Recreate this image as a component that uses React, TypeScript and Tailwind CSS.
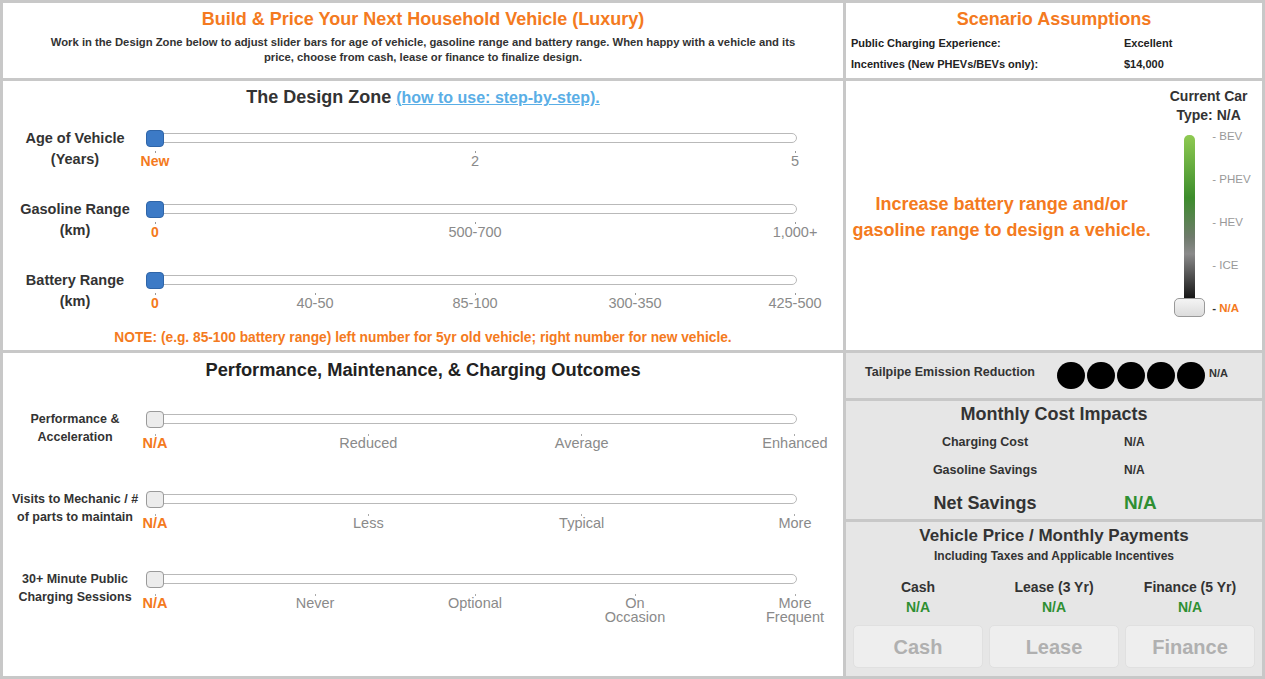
const font = "font-['Liberation_Sans',Arial,sans-serif]";

type SliderRow = { label: string[]; ticks: string[][] };

const designRows: SliderRow[] = [
  { label: ["Age of Vehicle", "(Years)"], ticks: [["New"], ["2"], ["5"]] },
  { label: ["Gasoline Range", "(km)"], ticks: [["0"], ["500-700"], ["1,000+"]] },
  {
    label: ["Battery Range", "(km)"],
    ticks: [["0"], ["40-50"], ["85-100"], ["300-350"], ["425-500"]],
  },
];

const outcomeRows: SliderRow[] = [
  { label: ["Performance &", "Acceleration"], ticks: [["N/A"], ["Reduced"], ["Average"], ["Enhanced"]] },
  { label: ["Visits to Mechanic / #", "of parts to maintain"], ticks: [["N/A"], ["Less"], ["Typical"], ["More"]] },
  {
    label: ["30+ Minute Public", "Charging Sessions"],
    ticks: [["N/A"], ["Never"], ["Optional"], ["On", "Occasion"], ["More", "Frequent"]],
  },
];

function Track({ blue }: { blue: boolean }) {
  return (
    <div className="relative flex h-[17px] items-center">
      <div className="h-[10px] w-full rounded-full border border-[#b9b9b9] bg-white" />
      {blue ? (
        <div className="absolute left-[-1px] top-0 h-[17px] w-[18px] rounded-[4px] border border-[#2f65a8] bg-[#3c7ac6]" />
      ) : (
        <div className="absolute left-[-1px] top-0 h-[17px] w-[18px] rounded-[4px] border border-[#9a9a9a] bg-[#ececec]" />
      )}
    </div>
  );
}

function DesignRow({ row }: { row: SliderRow }) {
  return (
    <div className="flex h-[71px]">
      <div className="-mt-[2px] w-[144px] text-center text-[14.5px] font-bold leading-[21px] text-[#333]">
        {row.label.map((l) => (
          <div key={l}>{l}</div>
        ))}
      </div>
      <div className="w-[650px]">
        <Track blue />
        <div className="ml-[8px] mt-[4px] flex w-[640px] justify-between">
          {row.ticks.map((t, i) => (
            <div key={i} className="flex w-0 flex-col items-center">
              <div className="h-[2px] w-px bg-[#999]" />
              <div
                className={
                  i === 0
                    ? "whitespace-nowrap text-[14px] font-bold leading-[16px] text-[#f47a20]"
                    : "whitespace-nowrap text-[14.5px] leading-[16px] text-[#8a8a8a]"
                }
              >
                {t[0]}
              </div>
            </div>
          ))}
        </div>
      </div>
    </div>
  );
}

function OutcomeRow({ row }: { row: SliderRow }) {
  return (
    <div className="flex h-[80px]">
      <div className="-mt-[0.5px] w-[144px] text-center text-[12.5px] font-bold leading-[18px] text-[#333]">
        {row.label.map((l) => (
          <div key={l} className="whitespace-nowrap">
            {l}
          </div>
        ))}
      </div>
      <div className="w-[650px]">
        <Track blue={false} />
        <div className="ml-[8px] mt-[6px] flex w-[640px] justify-between">
          {row.ticks.map((t, i) => (
            <div key={i} className="flex w-0 flex-col items-center">
              <div className="h-[2px] w-px bg-[#aaa]" />
              <div
                className={
                  i === 0
                    ? "whitespace-nowrap text-[14.5px] font-bold leading-[14px] text-[#f47a20]"
                    : "whitespace-nowrap text-center text-[14.5px] leading-[14px] text-[#8a8a8a]"
                }
              >
                {t.map((line) => (
                  <div key={line}>{line}</div>
                ))}
              </div>
            </div>
          ))}
        </div>
      </div>
    </div>
  );
}

function CarType() {
  const types = ["BEV", "PHEV", "HEV", "ICE"];
  return (
    <div className="w-[105px] pt-[5.5px]">
      <div className="pr-[2px] text-center text-[14px] font-bold leading-[19px] text-[#333]">
        <div>Current Car</div>
        <div>Type: N/A</div>
      </div>
      <div className="ml-[17px] mt-[4.5px] flex">
        <div className="flex w-[31px] flex-col items-center pt-[6px]">
          <div className="h-[165px] w-[11px] rounded-t-[5px] bg-[linear-gradient(to_bottom,#8fca52_0%,#3d8d2c_38%,#6f7a6c_62%,#8a8a8a_72%,#111_100%)]" />
          <div className="-mt-[2px] h-[19px] w-[31px] rounded-[5px] border border-[#999] bg-[linear-gradient(to_bottom,#f4f4f4,#dcdcdc)]" />
        </div>
        <div className="ml-[7px] flex flex-col gap-[29px] text-[11.5px] leading-[14px]">
          {types.map((t) => (
            <div key={t} className="text-[#999]">
              - {t}
            </div>
          ))}
          <div className="font-bold text-[#f47a20]">
            <span className="text-[#333]">-</span> N/A
          </div>
        </div>
      </div>
    </div>
  );
}

export default function App() {
  return (
    <div
      className={`${font} grid h-[679px] w-[1265px] grid-cols-[840px_416px] grid-rows-[75px_269px_323px] gap-[3px] bg-[#c8c8c8] p-[3px]`}
    >
      {/* header */}
      <div className="bg-white pt-[5px] text-center">
        <div className="text-[18px] font-bold leading-[22px] text-[#f47a20]">
          Build &amp; Price Your Next Household Vehicle (Luxury)
        </div>
        <div className="mt-[4.5px] text-[11.25px] font-bold leading-[15px] text-[#333]">
          Work in the Design Zone below to adjust slider bars for age of vehicle, gasoline range and battery range. When
          happy with a vehicle and its
          <br />
          price, choose from cash, lease or finance to finalize design.
        </div>
      </div>

      <div className="bg-white pt-[5px]">
        <div className="text-center text-[18px] font-bold leading-[22px] text-[#f47a20]">Scenario Assumptions</div>
        <div className="mt-[2.5px] grid grid-cols-[273px_1fr] pl-[5px] text-[11px] font-bold leading-[21px] text-[#222]">
          <div>Public Charging Experience:</div>
          <div>Excellent</div>
          <div>Incentives (New PHEVs/BEVs only):</div>
          <div>$14,000</div>
        </div>
      </div>

      {/* design zone */}
      <div className="bg-white pt-[4px]">
        <div className="text-center leading-[24px]">
          <span className="text-[18px] font-bold text-[#333]">The Design Zone </span>
          <span className="text-[16px] font-bold text-[#5aaee6] underline">(how to use: step-by-step).</span>
        </div>
        <div className="mt-[19.5px] flex flex-col">
          {designRows.map((r) => (
            <DesignRow key={r.label[0]} row={r} />
          ))}
        </div>
        <div className="-mt-[13px] text-center text-[13.75px] font-bold leading-[16px] text-[#f47a20]">
          NOTE: (e.g. 85-100 battery range) left number for 5yr old vehicle; right number for new vehicle.
        </div>
      </div>

      <div className="flex bg-white">
        <div className="flex w-[312px] items-center justify-center text-center text-[18px] font-bold leading-[26px] text-[#f47a20]">
          <div className="mt-[2px]">
            Increase battery range and/or
            <br />
            gasoline range to design a vehicle.
          </div>
        </div>
        <CarType />
      </div>

      {/* outcomes */}
      <div className="bg-white pt-[5px]">
        <div className="text-center text-[18.25px] font-bold leading-[24px] text-[#222]">
          Performance, Maintenance, &amp; Charging Outcomes
        </div>
        <div className="mt-[28.5px] flex flex-col">
          {outcomeRows.map((r) => (
            <OutcomeRow key={r.label[0]} row={r} />
          ))}
        </div>
      </div>

      <div className="flex flex-col gap-[3px]">
        <div className="flex h-[45px] items-center bg-[#e6e6e6]">
          <div className="mb-[7px] w-[211px] pl-[19px] text-[12.5px] font-bold text-[#333]">
            Tailpipe Emission Reduction
          </div>
          <div className="flex gap-[2px]">
            {[0, 1, 2, 3, 4].map((i) => (
              <div key={i} className="h-[27px] w-[28px] rounded-full bg-black" />
            ))}
          </div>
          <div className="mb-[5px] ml-[4px] text-[11px] font-bold text-[#333]">N/A</div>
        </div>

        <div className="h-[118px] bg-[#e6e6e6] pt-[2px]">
          <div className="text-center text-[18px] font-bold leading-[22px] text-[#333]">Monthly Cost Impacts</div>
          <div className="mt-[3px] grid grid-cols-[278px_1fr] font-bold text-[#333]">
            <div className="text-center text-[12.5px] leading-[28px]">Charging Cost</div>
            <div className="text-[12px] leading-[28px]">N/A</div>
            <div className="text-center text-[12.5px] leading-[28px]">Gasoline Savings</div>
            <div className="text-[12px] leading-[28px]">N/A</div>
            <div className="text-center text-[18px] leading-[38px]">Net Savings</div>
            <div className="text-[19px] leading-[38px] text-[#2f8f32]">N/A</div>
          </div>
        </div>

        <div className="flex-1 bg-[#e6e6e6] px-[7px] pt-[3px]">
          <div className="text-center text-[17px] font-bold leading-[22px] text-[#333]">
            Vehicle Price / Monthly Payments
          </div>
          <div className="mt-[2px] text-center text-[12px] font-bold leading-[14px] text-[#333]">
            Including Taxes and Applicable Incentives
          </div>
          <div className="mt-[14px] grid grid-cols-3 gap-x-[6px] text-center font-bold">
            {["Cash", "Lease (3 Yr)", "Finance (5 Yr)"].map((c) => (
              <div key={c}>
                <div className="text-[14px] leading-[20px] text-[#333]">{c}</div>
                <div className="text-[14px] leading-[20px] text-[#2f8f32]">N/A</div>
              </div>
            ))}
            {["Cash", "Lease", "Finance"].map((b) => (
              <div
                key={b}
                className="mt-[8px] flex h-[43px] items-center justify-center rounded-[5px] border border-[#e0e0e0] bg-[#eeeeee] text-[20px] text-[#b0b0b0]"
              >
                {b}
              </div>
            ))}
          </div>
        </div>
      </div>
    </div>
  );
}
